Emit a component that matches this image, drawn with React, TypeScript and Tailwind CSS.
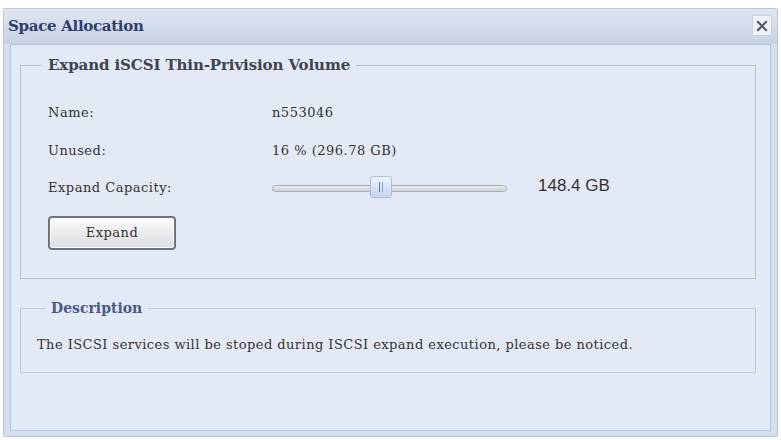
import React from "react";

const serif = { fontFamily: '"DejaVu Serif", "Liberation Serif", serif' };

export default function App() {
  return (
    <div className="w-[781px] h-[440px] bg-white pt-[8px] px-[3px] pb-[3px]" style={serif}>
      <div className="h-[429px] w-[775px] border border-[#b9c6da] bg-[#d5deec] flex flex-col rounded-[2px]">
        <div className="h-[35px] flex items-center justify-between bg-gradient-to-b from-[#dfe6f1] to-[#c6d2e4] pl-[4px] pr-[5px]">
          <span className="text-[15px] font-bold text-[#2e3f6e] tracking-[-0.3px]">Space Allocation</span>
          <div className="w-[20px] h-[21px] border border-[#c9d2e0] bg-[#eef2f8] flex items-center justify-center mt-[-2px]">
            <svg width="12" height="12" viewBox="0 0 12 12">
              <path d="M2 2 L10 10 M10 2 L2 10" stroke="#555c66" strokeWidth="2.2" strokeLinecap="square" />
            </svg>
          </div>
        </div>
        <div className="flex-1 mx-[6px] mb-[5px] border border-[#b3c4de] bg-[#e4e9f6] flex flex-col pt-[10px] pl-[9px] pr-[14px]">
          <fieldset className="border border-[#b8bfcc] pl-[27px] pr-[10px] pb-[28px]">
            <legend className="ml-[-6px] px-[6px] text-[15px] font-bold text-[#3e4450] h-[20px] leading-[20px] tracking-[-0.1px]">
              Expand iSCSI Thin-Privision Volume
            </legend>
            <div className="text-[13px] tracking-[0.5px] text-[#333] mt-[23px] h-[30px] flex items-center">
              <span className="w-[224px]">Name:</span>
              <span>n553046</span>
            </div>
            <div className="text-[13px] tracking-[0.5px] text-[#333] mt-[8px] h-[30px] flex items-center">
              <span className="w-[224px]">Unused:</span>
              <span>16 % (296.78 GB)</span>
            </div>
            <div className="text-[13px] tracking-[0.5px] text-[#333] mt-[7px] h-[30px] flex items-center">
              <span className="w-[224px]">Expand Capacity:</span>
              <div className="relative w-[235px] h-[22px] flex items-center">
                <div className="w-full h-[7px] rounded-full border border-[#a9adb3] bg-gradient-to-b from-[#e9ebee] to-[#cfd3d8]" />
                <div className="absolute left-[98px] top-[-1px] w-[22px] h-[22px] rounded-[3px] border border-[#a8bee0] bg-gradient-to-b from-[#eef4fd] to-[#c4d6f0] flex items-center justify-center gap-[2px]">
                  <div className="w-[1px] h-[10px] bg-[#5a78a8]" />
                  <div className="w-[1px] h-[10px] bg-[#8aa2c8]" />
                </div>
              </div>
              <span className="ml-[31px] text-[17px] tracking-normal text-[#333] mt-[-4px]" style={{ fontFamily: '"Liberation Sans", Arial, sans-serif' }}>148.4 GB</span>
            </div>
            <button className="mt-[13px] w-[128px] h-[34px] rounded-[4px] border-2 border-[#6d7480] bg-gradient-to-b from-[#fbfbfb] to-[#dcdde0] text-[13px] tracking-[0.5px] text-[#333] shadow-[inset_0_0_0_1px_#ffffff]" style={serif}>
              Expand
            </button>
          </fieldset>
          <fieldset className="mt-[19px] border border-[#c2c8d4] pl-[16px] pb-[17px]">
            <legend className="ml-[8px] px-[6px] text-[14px] font-bold text-[#4a5a86] h-[20px] leading-[20px]">
              Description
            </legend>
            <div className="mt-[17px] h-[20px] flex items-center text-[13px] tracking-[0.45px] text-[#333]">
              The ISCSI services will be stoped during ISCSI expand execution, please be noticed.
            </div>
          </fieldset>
        </div>
      </div>
    </div>
  );
}
